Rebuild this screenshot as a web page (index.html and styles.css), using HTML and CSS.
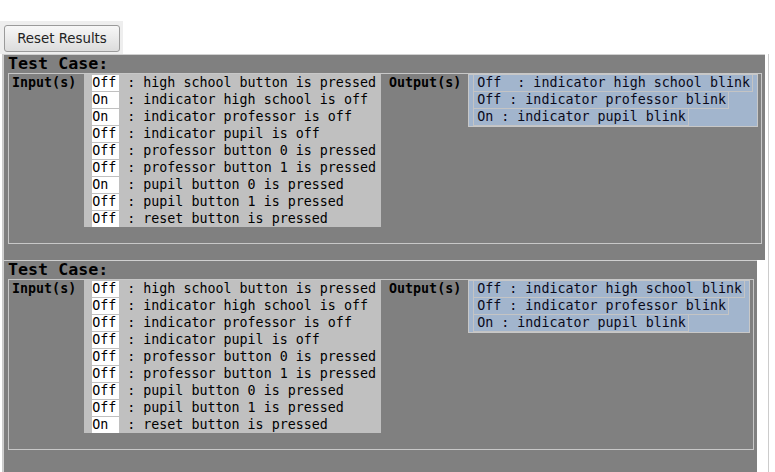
FILE: index.html
```html
<!DOCTYPE html>
<html>
<head>
<meta charset="utf-8">
<title>Test Results</title>
<link rel="stylesheet" href="styles.css">
</head>
<body>
<div class="toolbar"><button class="reset">Reset Results</button></div>
<div class="results">
  <div class="testcase">
    <div class="tc-title">Test Case:</div>
    <div class="tc-body">
      <div class="label in-label">Input(s)</div>
      <div class="inputs">
        <div class="row"><span class="val">Off</span> : high school button is pressed</div>
        <div class="row"><span class="val">On</span> : indicator high school is off</div>
        <div class="row"><span class="val">On</span> : indicator professor is off</div>
        <div class="row"><span class="val">Off</span> : indicator pupil is off</div>
        <div class="row"><span class="val">Off</span> : professor button 0 is pressed</div>
        <div class="row"><span class="val">Off</span> : professor button 1 is pressed</div>
        <div class="row"><span class="val">On</span> : pupil button 0 is pressed</div>
        <div class="row"><span class="val">Off</span> : pupil button 1 is pressed</div>
        <div class="row"><span class="val">Off</span> : reset button is pressed</div>
      </div>
      <div class="label out-label">Output(s)</div>
      <div class="outputs">
        <div class="out">Off  : indicator high school blink</div>
        <div class="out">Off : indicator professor blink</div>
        <div class="out">On : indicator pupil blink</div>
      </div>
    </div>
  </div>
  <div class="testcase">
    <div class="tc-title">Test Case:</div>
    <div class="tc-body">
      <div class="label in-label">Input(s)</div>
      <div class="inputs">
        <div class="row"><span class="val">Off</span> : high school button is pressed</div>
        <div class="row"><span class="val">Off</span> : indicator high school is off</div>
        <div class="row"><span class="val">Off</span> : indicator professor is off</div>
        <div class="row"><span class="val">Off</span> : indicator pupil is off</div>
        <div class="row"><span class="val">Off</span> : professor button 0 is pressed</div>
        <div class="row"><span class="val">Off</span> : professor button 1 is pressed</div>
        <div class="row"><span class="val">Off</span> : pupil button 0 is pressed</div>
        <div class="row"><span class="val">Off</span> : pupil button 1 is pressed</div>
        <div class="row"><span class="val">On</span> : reset button is pressed</div>
      </div>
      <div class="label out-label">Output(s)</div>
      <div class="outputs">
        <div class="out">Off : indicator high school blink</div>
        <div class="out">Off : indicator professor blink</div>
        <div class="out">On : indicator pupil blink</div>
      </div>
    </div>
  </div>
</div>
</body>
</html>
```
FILE: styles.css
```css
html, body {
  margin: 0;
  background: #ffffff;
}
body {
  padding-top: 21px;
  font-family: "DejaVu Sans Mono", monospace;
  font-size: 13.33px;
  color: #000;
}
.toolbar {
  width: fit-content;
  background: #eeeeee;
  padding: 4px 3px 2px 4px;
}
.reset {
  display: block;
  width: 116px;
  height: 27px;
  margin: 0;
  padding: 0 0 1px 0;
  font-family: "DejaVu Sans", sans-serif;
  font-size: 13.33px;
  color: #222;
  background: linear-gradient(#f7f7f7, #dcdcdc);
  border: 1px solid #9a9a9a;
  border-radius: 3px;
}
.results {
  margin-left: 2px;
  width: 765px;
  min-height: 420px;
  border-left: 1px solid #cccccc;
  border-right: 1px solid #cccccc;
}
.testcase {
  width: fit-content;
  background: #808080;
  border-top: 1px solid #d0d0d0;
  border-left: 1px solid #d0d0d0;
  padding: 0 3px 16px 4px;
}
.testcase:last-child {
  padding-bottom: 30px;
}
.tc-title {
  font-weight: bold;
  font-size: 16.67px;
  line-height: 18px;
  height: 18px;
}
.tc-body {
  display: flex;
  align-items: flex-start;
  border: 1px solid #c8c8c8;
  padding: 0 3px 16px 0;
}
.label {
  font-weight: bold;
  line-height: 16px;
  padding-top: 1px;
  white-space: pre;
}
.in-label {
  padding-left: 3px;
  padding-right: 8px;
}
.out-label {
  padding-left: 8px;
  padding-right: 7px;
}
.inputs {
  background: #c0c0c0;
  padding: 0 5px 0 8px;
}
.row {
  padding-top: 1px;
  height: 16px;
  line-height: 16px;
  white-space: pre;
}
.val {
  display: inline-block;
  width: 24px;
  padding-right: 3px;
  background: #ffffff;
  height: 16px;
  vertical-align: top;
}
.outputs {
  background: #a2b5cd;
  border: 1px solid #c8c8c8;
  padding: 0 4px 0 4px;
}
.out {
  width: fit-content;
  height: 16px;
  line-height: 16px;
  padding: 0 2px 0 3px;
  border-left: 1px solid #c4c4c4;
  border-right: 1px solid #c4c4c4;
  border-bottom: 1px solid #c4c4c4;
  white-space: pre;
  color: #0a0a1a;
}
```
